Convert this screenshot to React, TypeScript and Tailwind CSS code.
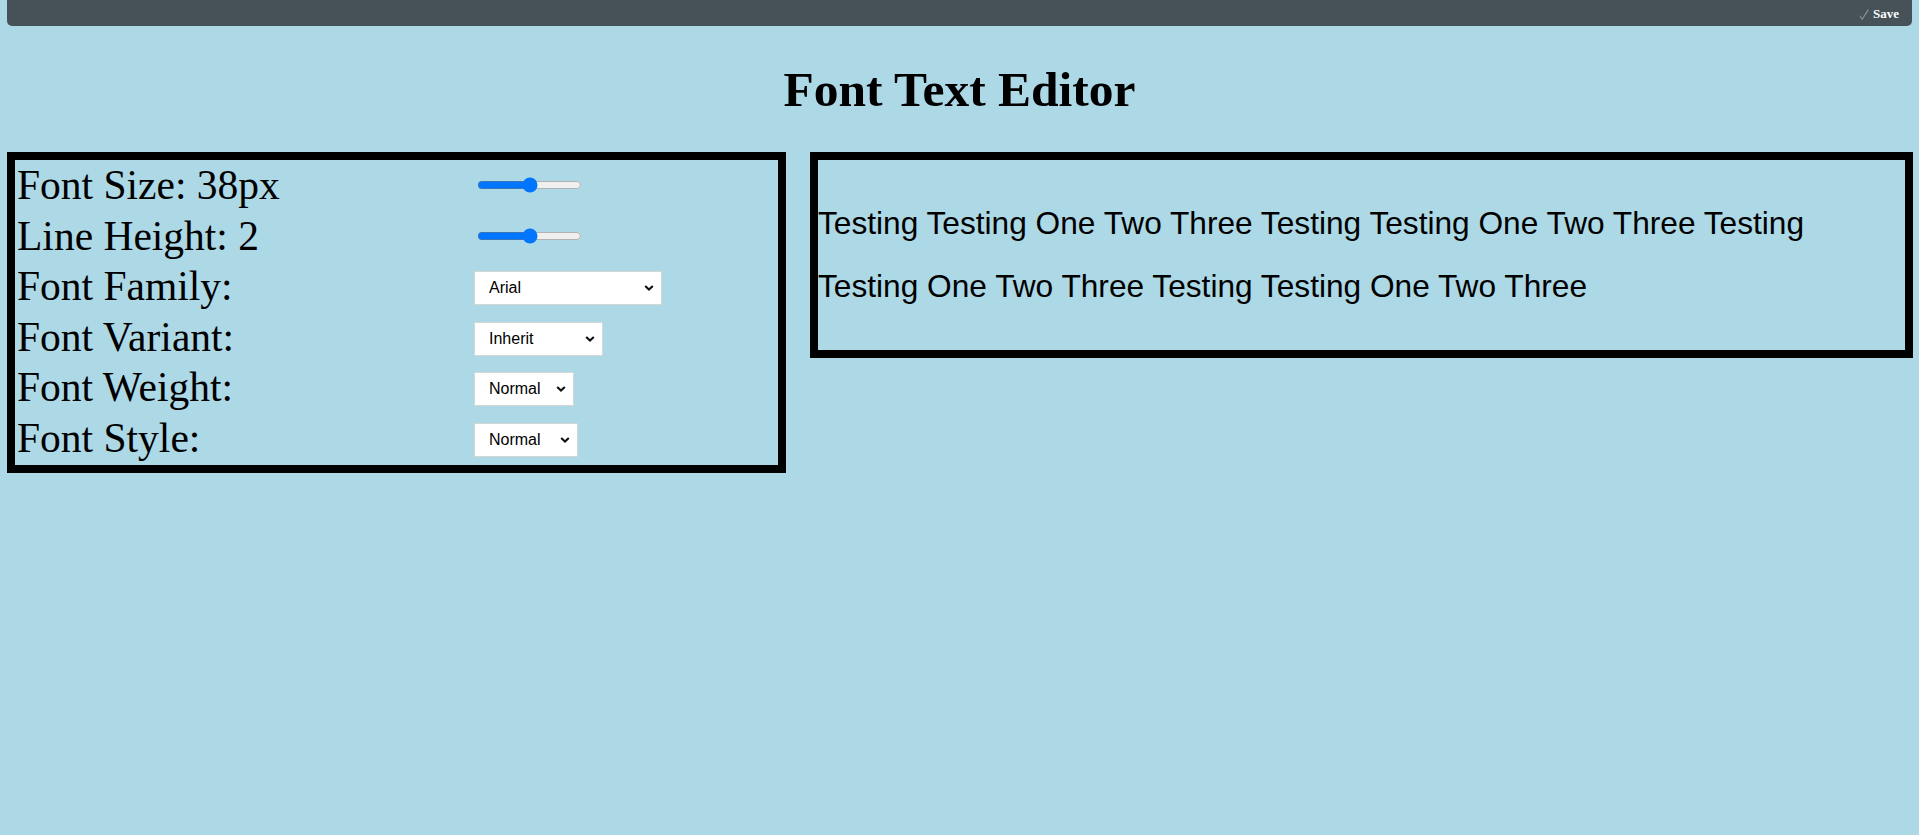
import React, { useState } from 'react';

const serif = "font-['Liberation_Serif','Times_New_Roman',serif]";
const sans = "font-['Liberation_Sans',Arial,sans-serif]";

const Chevron: React.FC = () => (
    <svg
        className="pointer-events-none absolute right-[8px] top-1/2 -translate-y-1/2"
        width="10"
        height="7"
        viewBox="0 0 10 7"
        fill="none"
    >
        <path d="M1.2 1.5l3.8 3.6 3.8-3.6" stroke="#111" strokeWidth="2.1" />
    </svg>
);

interface SelectProps {
    value: string;
    options: string[];
    width: string;
    onChange: (v: string) => void;
}

const Select: React.FC<SelectProps> = ({ value, options, width, onChange }) => (
    <div className={`relative mt-[4px] leading-none ${width}`}>
        <select
            value={value}
            onChange={(e) => onChange(e.target.value)}
            className={`${sans} block h-[34px] w-full appearance-none border border-[#d6d6d6] bg-white pl-[14px] text-[16px] leading-normal text-black outline-none`}
        >
            {options.map((o) => (
                <option key={o}>{o}</option>
            ))}
        </select>
        <Chevron />
    </div>
);

export default function App() {
    const [fontSize, setFontSize] = useState(38);
    const [lineHeight, setLineHeight] = useState(2);
    const [family, setFamily] = useState('Arial');
    const [variant, setVariant] = useState('Inherit');
    const [weight, setWeight] = useState('Normal');
    const [style, setStyle] = useState('Normal');

    const text = 'Testing Testing One Two Three '.repeat(4).trim();

    return (
        <div className="min-h-screen bg-[#add8e6]">
            {/* top bar */}
            <div className="mx-[7px] flex h-[26px] items-center justify-end rounded-b-[5px] bg-[#465158] pr-[13px]">
                <svg width="10" height="11" viewBox="0 0 10 11" fill="none" className="mr-[4px] mt-[2px]">
                    <path d="M0.8 6.8l2.4 3.4L9.4 0.6" stroke="#8c969b" strokeWidth="1.1" />
                </svg>
                <span className={`${serif} text-[13px] font-bold leading-none text-white`}>Save</span>
            </div>

            <h1 className={`${serif} mb-[35px] mt-[36px] text-center text-[49.5px] font-bold leading-[55px] text-black`}>
                Font Text Editor
            </h1>

            <div className="flex items-start gap-[24px] pl-[7px] pr-[6px]">
                {/* controls */}
                <div className="w-[779px] shrink-0 border-[8px] border-black pb-[2px]">
                    <div className={`${serif} grid grid-cols-[459px_1fr] auto-rows-[50.5px] text-[41.5px] leading-[50.5px] text-black`}>
                        <div className="whitespace-nowrap pl-[2px]">Font Size: {fontSize}px</div>
                        <div className="flex items-center">
                            <input
                                type="range"
                                min={0}
                                max={76}
                                value={fontSize}
                                onChange={(e) => setFontSize(Number(e.target.value))}
                                className="ml-[3px] w-[105px] accent-[#0075ff]"
                            />
                        </div>

                        <div className="whitespace-nowrap pl-[2px]">Line Height: {lineHeight}</div>
                        <div className="flex items-center">
                            <input
                                type="range"
                                min={0}
                                max={4}
                                step={0.1}
                                value={lineHeight}
                                onChange={(e) => setLineHeight(Number(e.target.value))}
                                className="ml-[3px] w-[105px] accent-[#0075ff]"
                            />
                        </div>

                        <div className="whitespace-nowrap pl-[2px]">Font Family:</div>
                        <div className="flex items-center">
                            <Select value={family} options={['Arial', 'Times New Roman', 'Courier New']} width="w-[188px]" onChange={setFamily} />
                        </div>

                        <div className="whitespace-nowrap pl-[2px]">Font Variant:</div>
                        <div className="flex items-center">
                            <Select value={variant} options={['Inherit', 'Normal', 'Small-caps']} width="w-[129px]" onChange={setVariant} />
                        </div>

                        <div className="whitespace-nowrap pl-[2px]">Font Weight:</div>
                        <div className="flex items-center">
                            <Select value={weight} options={['Normal', 'Bold']} width="w-[100px]" onChange={setWeight} />
                        </div>

                        <div className="whitespace-nowrap pl-[2px]">Font Style:</div>
                        <div className="flex items-center">
                            <Select value={style} options={['Normal', 'Italic']} width="w-[104px]" onChange={setStyle} />
                        </div>
                    </div>
                </div>

                {/* preview */}
                <div className="min-w-0 flex-1 border-[8px] border-black">
                    <p className={`${sans} my-[31.67px] text-[31.67px] leading-[63.33px] text-black`}>{text}</p>
                </div>
            </div>
        </div>
    );
}
